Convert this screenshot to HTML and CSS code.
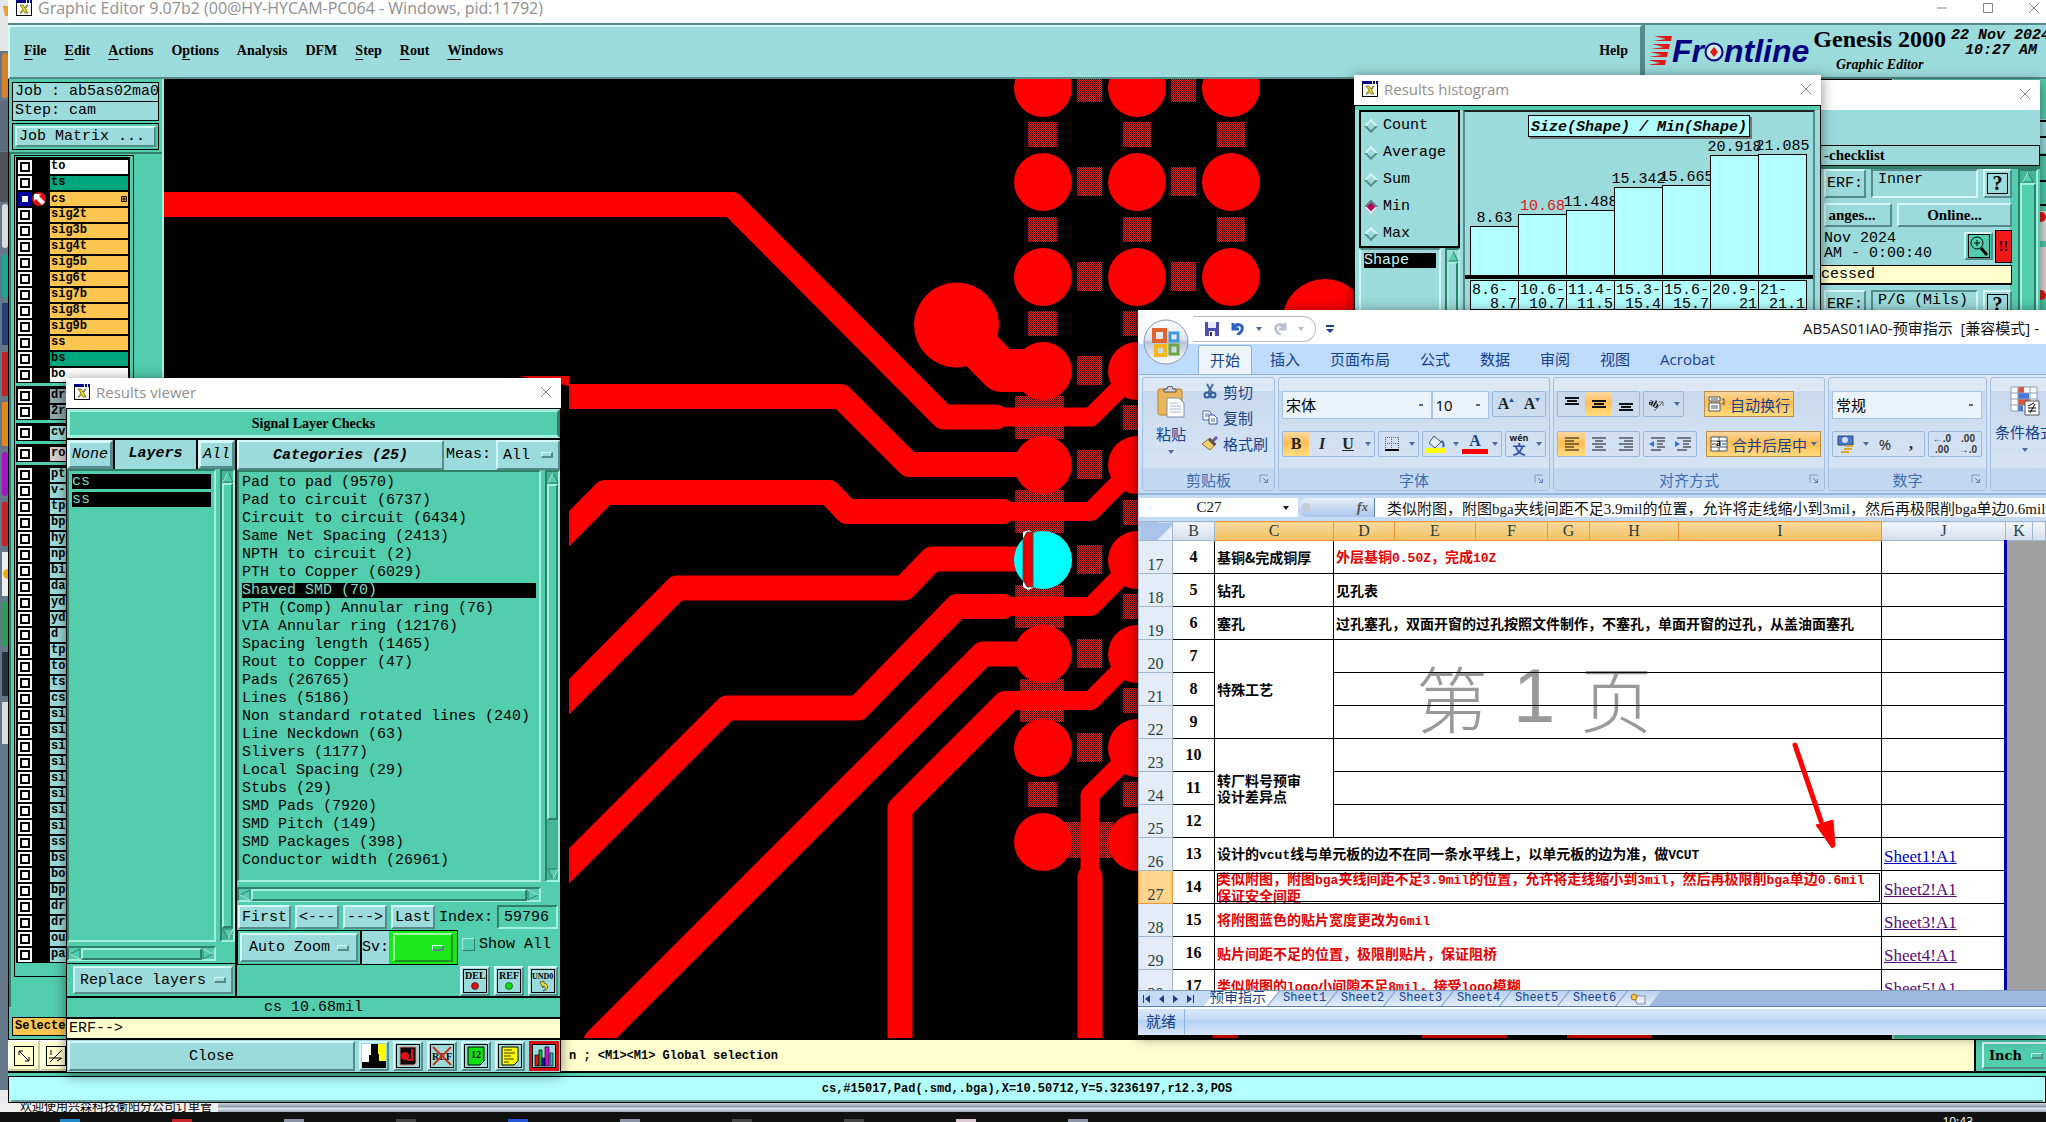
FILE: index.html
```html
<!DOCTYPE html>
<html lang="zh-CN">
  <head>
    <meta charset="UTF-8" />
    <meta name="viewport" content="width=device-width, initial-scale=1.0" />
    <title>Graphic Editor</title>
    <link rel="stylesheet" href="styles.css">
  </head>
  <body>
    <!-- shared icons -->
    <svg class="defs" width="0" height="0">
      <symbol id="xwin" viewBox="0 0 16 16">
        <rect x="0.5" y="0.5" width="15" height="15" fill="#fff" stroke="#000"/>
        <rect width="16" height="3" fill="#000080"/>
        <rect x="10" width="1" height="3" fill="#fff"/><rect x="13" width="1" height="3" fill="#fff"/>
        <path d="M4 5h3l2 3 2-3h1l-2.500 4L12 13H9L7.500 10.500 5.500 13H4l3-4z" fill="#f0e000" stroke="#333" stroke-width="0.600"/>
      </symbol>
      <symbol id="close" viewBox="0 0 12 12"><path d="M1 1l10 10M11 1L1 11" stroke="#888" fill="none"/></symbol>
      <symbol id="launch" viewBox="0 0 10 10"><path d="M1 9V1h8" stroke="#7f9bc4" fill="none"/><path d="M4 4l4 4M8.500 5v3.500H5" stroke="#5b7fb5" fill="none"/></symbol>
      <symbol id="up" viewBox="0 0 12 12"><path d="M6 1L1 11h10z" fill="#52cdad" stroke="#2f7f69"/><path d="M6 1L1 11" stroke="#b8f5e6"/></symbol>
    </svg>

    <div class="desktop">
      <svg class="strip" width="8" height="1103" viewBox="0 0 8 1103">
        <rect width="8" height="1103" fill="#64788a"/>
        <rect width="8" height="51" fill="#e4e6e8"/><path d="M3 6h5v10H5z" fill="#e8a030"/>
        <rect x="2" y="53" width="6" height="45" rx="3" fill="#d9822b"/>
        <rect y="101" width="8" height="50" fill="#5d6b80"/>
        <rect y="152" width="8" height="50" fill="#4f545b"/>
        <rect x="2" y="204" width="6" height="44" rx="3" fill="#d8dadd"/>
        <rect x="2" y="254" width="6" height="44" rx="3" fill="#1fa698"/>
        <rect x="2" y="303" width="6" height="42" fill="#27407c"/>
        <rect x="2" y="352" width="6" height="44" fill="#c22026"/>
        <rect x="2" y="402" width="6" height="44" fill="#e08a1c"/>
        <rect x="2" y="452" width="6" height="44" rx="3" fill="#a316c8"/>
        <rect x="2" y="502" width="6" height="44" fill="#c8242c"/>
        <rect x="2" y="552" width="6" height="44" fill="#eee"/><circle cx="8" cy="574" r="5" fill="#eab000"/>
        <rect x="2" y="602" width="6" height="44" fill="#2f9a58"/>
        <rect x="2" y="652" width="6" height="44" fill="#26313a"/>
        <rect x="2" y="702" width="6" height="42" fill="#ddd"/>
        <rect y="1090" width="8" height="13" fill="#e8eaec"/>
      </svg>

      <main class="editor">
        <header class="titlebar editor-title">
          <svg width="16" height="16"><use href="#xwin"/></svg>
          <span>Graphic Editor 9.07b2 (00@HY-HYCAM-PC064 - Windows, pid:11792)</span>
          <div class="win-buttons">
            <svg width="12" height="12"><path d="M1 6h10" stroke="#888"/></svg>
            <svg width="12" height="12"><path d="M1.500 1.500h9v9h-9z" stroke="#888" fill="none"/></svg>
            <svg width="12" height="12"><use href="#close"/></svg>
          </div>
        </header>

        <div class="menubar">
          <nav class="menus">
            <a href="#"><u>F</u>ile</a><a href="#"><u>E</u>dit</a><a href="#"><u>A</u>ctions</a><a href="#">O<u>p</u>tions</a><a href="#">Analysis</a><a href="#">DFM</a><a href="#"><u>S</u>tep</a><a href="#"><u>R</u>out</a><a href="#"><u>W</u>indows</a>
            <a href="#" class="help">Help</a>
          </nav>
          <div class="brand">
            <svg width="22" height="30" viewBox="0 0 22 30" fill="#e01818">
              <path d="M4 0h18l-1 5H3l13-2zM2 8h18l-1 5H1l13-2zM0 16h18l-1 5H-1l13-2zM-2 24h18l-1 5H-3l13-2z"/>
            </svg>
            <span class="logo">Fr<svg width="20" height="24" viewBox="0 0 20 24"><circle cx="10" cy="13" r="8.500" fill="#cfeef0" stroke="#000080" stroke-width="2"/><path d="M10 8l4 5-4 5-4-5z" fill="#e01818"/></svg>ntline</span>
            <div class="product"><b>Genesis 2000</b><i>Graphic Editor</i></div>
            <div class="clock"><span>22 Nov 2024</span><span>10:27 AM</span></div>
          </div>
        </div>

        <div class="workspace">
          <aside class="side">
            <div class="job">Job : ab5as02ma0</div>
            <div class="job">Step: cam</div>
            <div class="matrix"><button>Job Matrix ...</button></div>
            <div class="layer-area"><div class="layers" id="layers"></div></div>
            <div class="selected">Selected</div>
          </aside>
          <div class="canvas">
            <svg id="board" viewBox="164 79 1728 961" preserveAspectRatio="xMinYMin slice">
              <defs>
                <pattern id="hatch" width="2" height="2" patternUnits="userSpaceOnUse"><rect width="2" height="2" fill="#3a0808"/><rect width="1" height="1" fill="#e01c1c"/><rect x="1" y="1" width="1" height="1" fill="#e01c1c"/></pattern>
              </defs>
              <g id="hatches" fill="url(#hatch)"></g>
              <g id="pads" fill="#f00"></g>
              <g class="trace">
                <path d="M164 204.500H732L943.500 417H996"/>
                <path d="M560 396.500H841L909 464.500H1043"/>
                <path d="M549 549L605 492.500H829L847 511.500H1003"/>
                <path d="M549 717L677 588H904L932 559H1043"/>
                <path d="M1003 606.500H957L858 708H727L549 886"/>
                <path d="M1043 654H983L596 1041"/>
                <path d="M1005 703.500L900 808.500V1038"/>
                <path d="M1090 877V1038"/>
                <path d="M1225 1030v8"/>
              </g>
              <g class="trace neck">
                <path d="M985 417H1091L1137 371"/>
                <path d="M990 511.500H1091L1137 465"/>
                <path d="M990 606.500H1091L1137 560"/>
                <path d="M1008 700.500H1091L1137 654"/>
                <path d="M1137 748L1090 795V880"/>
              </g>
              <path d="M956 325L1001 370.500H1043" stroke="#f00" stroke-width="43" fill="none" stroke-linejoin="round"/>
              <circle cx="956.500" cy="325" r="42.500" fill="#f00"/>
              <circle cx="1325" cy="322" r="43" fill="#f00"/>
              <path d="M1422 1030h85v8h-85zM1567 1030h85v8h-85z" fill="#f00"/>
              <circle cx="1043" cy="560" r="29" fill="#0ff"/>
              <path d="M1023 532l6-2 4 3v5h-10zM1023 582h10v6l-5 2-5-3z" fill="#fff"/>
              <path d="M1023 539l4-7h6v55h-6l-4-7z" fill="#e40000" stroke="#555"/>
              <path d="M560 380h9v660h-9z"/>
              <path d="M518 376h51v10z" fill="#f00"/>
              <path d="M580 1038h1320v14H580z"/>
            </svg>
          </div>
          <aside class="right-tools">
            <svg width="8" height="200" viewBox="0 0 8 200"><rect y="12" width="8" height="34" fill="#9cdbdb"/><path d="M0 14h8M0 30h8M0 48h8M0 74h8M0 98h8" stroke="#000" stroke-width="2"/><rect y="104" width="8" height="30" fill="#dcdcdc"/><circle cx="3" cy="110" r="5" fill="#e01818"/><rect y="140" width="8" height="50" fill="#e8d8d8"/><circle cx="3" cy="188" r="5" fill="#e01818"/></svg>
          </aside>
        </div>

        <div class="message-row">
          <button class="tool"><svg width="20" height="20" viewBox="0 0 20 20" fill="none" stroke="#000"><rect x="0.500" y="0.500" width="19" height="19"/><path d="M5 5l10 10M5 9V5h4M15 11v4h-4"/></svg></button>
          <button class="tool"><svg width="20" height="20" viewBox="0 0 20 20" fill="none" stroke="#000"><rect x="0.500" y="0.500" width="19" height="19"/><path d="M4 16L16 4M3 12h12M5 4v5M11 15l5-3"/></svg></button>
          <span class="message">n ; &lt;M1&gt;&lt;M1&gt; Global selection</span>
          <div class="unit"><button class="menu-btn">Inch <i></i></button></div>
        </div>
        <div class="position-row"><output>cs,#15017,Pad(.smd,.bga),X=10.50712,Y=5.3236197,r12.3,POS</output></div>
      </main>
    </div>
    <div class="page-edge"><span>欢迎使用兴森科技衡阳分公司订单管</span></div>
    <footer class="taskbar"><i class="t1"></i><i class="t2"></i><i class="t3"></i><i class="t4"></i><i class="t5"></i><i class="t3"></i><i class="t4"></i><i class="t4"></i><i class="t6"></i><i class="t3"></i><time>10:43</time></footer>

    <!-- Results viewer -->
    <section class="window viewer">
      <header class="titlebar"><svg width="16" height="16"><use href="#xwin"/></svg><span>Results viewer</span><svg class="x" width="12" height="12"><use href="#close"/></svg></header>
      <div class="viewer-body">
        <h2 class="check-title">Signal Layer Checks</h2>
        <div class="viewer-cols">
          <div class="vcol-left">
            <div class="layer-head"><button>None</button><b>Layers</b><button>All</button></div>
            <div class="list-wrap">
              <ul class="list"><li class="on">cs</li><li class="on">ss</li></ul>
              <div class="vbar"><svg width="12" height="12"><use href="#up"/></svg><i></i><svg class="down" width="12" height="12"><use href="#up"/></svg></div>
            </div>
            <div class="hbar"><svg class="left" width="12" height="12"><use href="#up"/></svg><i></i><svg class="right" width="12" height="12"><use href="#up"/></svg></div>
            <div class="replace"><button class="menu-btn">Replace layers <i></i></button></div>
          </div>
          <div class="vcol-right">
            <div class="cat-head"><button class="cat">Categories (25)</button><span>Meas:</span><button class="menu-btn">All <i></i></button></div>
            <div class="list-wrap">
              <ul class="list" id="categories"></ul>
              <div class="vbar part"><svg width="12" height="12"><use href="#up"/></svg><i></i><em></em><svg class="down" width="12" height="12"><use href="#up"/></svg></div>
            </div>
            <div class="hbar"><svg class="left" width="12" height="12"><use href="#up"/></svg><i></i><svg class="right" width="12" height="12"><use href="#up"/></svg></div>
            <div class="nav-row"><button>First</button><button>&lt;---</button><button>---&gt;</button><button>Last</button><label for="index">Index:</label><input id="index" value="59796"></div>
            <div class="zoom-row"><div class="framed"><button class="menu-btn">Auto Zoom <i></i></button></div><div class="framed sv"><span>Sv:</span><div><button class="menu-btn" aria-label="Severity"><i></i></button></div></div><label class="show"><input type="checkbox">Show All</label></div>
            <div class="icon-row">
              <button class="ibtn"><svg width="24" height="24" viewBox="0 0 24 24"><rect x="0.500" y="0.500" width="23" height="23" fill="none" stroke="#000"/><text x="2" y="10" class="tiny">DEL</text><circle cx="12" cy="17" r="3.500" fill="#e01010" stroke="#000" stroke-width="0.500"/></svg></button>
              <button class="ibtn"><svg width="24" height="24" viewBox="0 0 24 24"><rect x="0.500" y="0.500" width="23" height="23" fill="none" stroke="#000"/><text x="2" y="10" class="tiny">REF</text><circle cx="12" cy="17" r="3.500" fill="#10e010" stroke="#000" stroke-width="0.500"/></svg></button>
              <button class="ibtn"><svg width="24" height="24" viewBox="0 0 24 24"><rect x="0.500" y="0.500" width="23" height="23" fill="none" stroke="#000"/><text x="1" y="10" class="tiny undo">UND0</text><path d="M9 13l4-1v2c5 1 5 7-1 8 3-2 3-5 0-5v2z" fill="#f0e020" stroke="#333" stroke-width="0.700"/></svg></button>
            </div>
          </div>
        </div>
        <div class="vmsg">cs 10.68mil</div>
        <div class="verf">ERF--&gt;</div>
        <div class="vfoot">
          <button class="close-btn">Close</button>
          <button class="ibtn"><svg width="24" height="24"><rect width="13" height="24" fill="#fff"/><rect x="12" width="12" height="24" fill="#ff0"/><path d="M9 0h7v10h1v7h7v7H0v-6h7v-7h2z"/><path d="M3 5h1M20 5h1"/></svg></button>
          <button class="ibtn"><svg width="24" height="24"><rect x="0.500" y="0.500" width="23" height="23" fill="none" stroke="#000"/><path d="M4 3h16v16l-2 2H4z" stroke="#d88"/><circle cx="9" cy="12" r="4" fill="#e01010"/><path d="M16 5v11h-5" stroke="#e01010" stroke-width="2" fill="none"/></svg></button>
          <button class="ibtn"><svg width="24" height="24"><rect x="0.500" y="0.500" width="23" height="23" fill="none" stroke="#000"/><text x="2" y="16" class="tiny">REF</text><path d="M3 3l18 18M21 3L3 21" stroke="#d03020" stroke-width="2"/></svg></button>
          <button class="ibtn"><svg width="24" height="24"><rect x="0.500" y="0.500" width="23" height="23" fill="none" stroke="#000"/><path d="M4 3h16v14l-4 4H4z" fill="#10e010" stroke="#000"/><text x="7" y="14" class="tiny">12</text></svg></button>
          <button class="ibtn"><svg width="24" height="24"><rect x="0.500" y="0.500" width="23" height="23" fill="none" stroke="#000"/><path d="M4 3h16v14l-4 4H4z" fill="#ff0" stroke="#000"/><path d="M6 6h8M6 9h11M6 12h7M6 15h10M6 18h5" stroke="#333"/></svg></button>
          <button class="ibtn hot"><svg width="24" height="24"><rect x="0.500" y="0.500" width="23" height="23" fill="#9cdbdb" stroke="#000"/><g stroke="#000" stroke-width="0.700"><path d="M3 11h4v11H3z" fill="#e01010"/><path d="M7 6h3v16H7z" fill="#10b030"/><path d="M10 14h3v8h-3z" fill="#1010e0"/><path d="M13 3h4v19h-4z" fill="#d010d0"/><path d="M18 9h3v13h-3z" fill="#20c0c0"/></g></svg></button>
        </div>
      </div>
    </section>

    <!-- Checklist -->
    <section class="window checklist">
      <header class="titlebar"><svg class="x" width="12" height="12"><use href="#close"/></svg></header>
      <div class="check-pad"></div>
      <div class="check-name">-checklist</div>
      <div class="check-body">
        <div class="check-main">
          <div class="erf"><button>ERF:</button><input aria-label="ERF" value="Inner"><button class="q">?</button></div>
          <div class="two"><button>anges...</button><button>Online...</button></div>
          <div class="run"><p>Nov 2024<br>AM - 0:00:40</p><button class="mag"><svg width="22" height="24" viewBox="0 0 22 24" fill="none" stroke="#000"><rect x="0.500" y="0.500" width="21" height="23"/><circle cx="9" cy="9" r="6"/><path d="M6 9h6M9 6v6"/><path d="M13 14l6 7" stroke-width="3"/></svg></button><b class="bang">!!</b></div>
          <div class="processed">cessed</div>
          <div class="erf"><button>ERF:</button><input aria-label="P/G ERF" value="P/G (Mils)"><button class="q">?</button></div>
        </div>
        <div class="vbar"><svg width="12" height="12"><use href="#up"/></svg><i></i></div>
      </div>
    </section>

    <!-- Results histogram -->
    <section class="window histogram">
      <header class="titlebar"><svg width="16" height="16"><use href="#xwin"/></svg><span>Results histogram</span><svg class="x" width="12" height="12"><use href="#close"/></svg></header>
      <div class="hist-body">
        <div class="hist-left">
          <div class="radios">
            <label><input type="radio" name="m">Count</label>
            <label><input type="radio" name="m">Average</label>
            <label><input type="radio" name="m">Sum</label>
            <label><input type="radio" name="m" checked>Min</label>
            <label><input type="radio" name="m">Max</label>
          </div>
          <div class="shape"><ul class="list"><li class="on">Shape</li></ul><div class="vbar"><svg width="12" height="12"><use href="#up"/></svg><i></i></div></div>
        </div>
        <div class="chart">
          <h3>Size(Shape) / Min(Shape)</h3>
          <div class="bars" id="bars"></div>
          <div class="ranges" id="ranges"></div>
        </div>
      </div>
    </section>

    <!-- Spreadsheet -->
    <section class="window excel">
      <header class="xl-title">
        <svg class="orb" width="46" height="46" viewBox="0 0 46 46">
          <defs><linearGradient id="og" x2="0" y2="1"><stop stop-color="#fff"/><stop offset="0.450" stop-color="#dde3ee"/><stop offset="0.500" stop-color="#b5c4dc"/><stop offset="1" stop-color="#fff"/></linearGradient></defs>
          <circle cx="23" cy="23" r="22" fill="url(#og)" stroke="#8b98b0"/>
          <g fill="none" stroke-width="4"><path d="M11 11h11v11H11z" stroke="#e2632b"/><path d="M27 14h8v8h-8z" stroke="#3f9bd4" stroke-width="3"/><path d="M13 27h9v9h-9z" stroke="#f5b71d"/><path d="M27 26h8v9h-8z" stroke="#6ca640" stroke-width="3"/></g>
        </svg>
        <div class="quick">
          <svg width="16" height="16"><path d="M1 1h14v14H1z" fill="#4a4fb0"/><path d="M4 1h8v6H4z" fill="#e8ecf8"/><path d="M5 10h6v5H5z" fill="#fff"/><path d="M6 11h2v4H6z" fill="#333"/></svg>
          <svg width="16" height="16"><path d="M3 2v6h6M4 7c3-6 10-3 8 2-1 3-4 4-4 5" stroke="#2f62c0" stroke-width="3" fill="none"/></svg>
          <i class="dd"></i>
          <svg width="16" height="16"><path d="M13 2v6H7M12 7C9 1 2 4 4 9c1 3 4 4 4 5" stroke="#b9c2cf" stroke-width="3" fill="none"/></svg>
          <i class="dd dim"></i>
        </div>
        <svg class="more" width="8" height="8" fill="#15428b"><path d="M0 0h8v2H0zM0 4h8L4 8z"/></svg>
        <span class="doc">AB5AS01IA0-预审指示 &nbsp;[兼容模式] -</span>
      </header>
      <nav class="tabs"><a href="#" class="active">开始</a><a href="#">插入</a><a href="#">页面布局</a><a href="#">公式</a><a href="#">数据</a><a href="#">审阅</a><a href="#">视图</a><a href="#">Acrobat</a></nav>
      <div class="ribbon">
        <div class="group g-clip">
          <div class="tools">
            <button class="paste"><svg width="28" height="32" viewBox="0 0 28 32"><rect x="1" y="3" width="24" height="26" rx="2" fill="#eab559" stroke="#b98331"/><path d="M7 6h12V3h-3a3 3 0 0 0-6 0H7z" fill="#cfd3d8" stroke="#555"/><path d="M10 12h12l5 5v14H10z" fill="#fff" stroke="#7a8fb5"/><path d="M13 17h8M13 20h11M13 23h11M13 26h11" stroke="#a9b9d4"/></svg>粘贴<i class="dd"></i></button>
            <div class="clip-list">
              <button><svg width="16" height="16"><path d="M5 1l5 9M11 1L6 10" stroke="#4b6ea8" stroke-width="2"/><circle cx="5" cy="12" r="2.500" fill="none" stroke="#345a9c" stroke-width="2"/><circle cx="11" cy="12" r="2.500" fill="none" stroke="#345a9c" stroke-width="2"/></svg>剪切</button>
              <button><svg width="16" height="16"><path d="M1 2h6l2 2v7H1z" fill="#fff" stroke="#4b6ea8"/><path d="M7 6h5l3 3v6H7z" fill="#fff" stroke="#2d559c"/><path d="M3 5h4M3 7h3M9 10h4M9 12h4" stroke="#4b6ea8"/></svg>复制</button>
              <button><svg width="16" height="16"><path d="M10 5l4-4 2 2-4 4z" fill="#6b50a5"/><path d="M8 3l6 6-6 6-8-6z" fill="#f0cf6c" stroke="#8c7434"/><path d="M8 3l6 6-2 2-6-6z" fill="#555"/></svg>格式刷</button>
            </div>
          </div>
          <div class="gname">剪贴板<svg width="10" height="10"><use href="#launch"/></svg></div>
        </div>
        <div class="group g-font">
          <div class="tools rows">
            <div class="row"><select class="font" aria-label="Font"><option>宋体</option></select><select class="size" aria-label="Size"><option>10</option></select><div class="set gapl"><button class="ser big">A<svg width="5" height="4" fill="#2b5ba8"><path d="M0 4l2.500-4L5 4z"/></svg></button><button class="ser">A<svg width="5" height="4" fill="#2b5ba8"><path d="M0 0h5L2.500 4z"/></svg></button></div></div>
            <div class="row gap"><div class="set"><button class="ser on">B</button><button class="ser it">I</button><button class="ser un">U</button><button class="drop"><i class="dd"></i></button></div>
              <div class="set"><button><svg width="14" height="14"><path d="M0.500 0v13M6.500 0v13M13.500 0v13M0 0.500h14M0 6.500h14" stroke="#567" stroke-dasharray="1 1"/><path d="M0 13h14" stroke="#000" stroke-width="2"/></svg></button><button class="drop"><i class="dd"></i></button></div>
              <div class="set"><button><svg width="20" height="18"><path d="M8 1l7 6-6 6-6-5z" fill="#e6ebf4" stroke="#456"/><path d="M15 6c3 1 3 4 2 6" stroke="#3566b8" stroke-width="2" fill="none"/><rect y="13" width="20" height="5" fill="#ff0"/></svg></button><button class="drop"><i class="dd"></i></button><button class="fcolor">A</button><button class="drop"><i class="dd"></i></button></div>
              <div class="set"><button class="wen">wén<b>文</b></button><button class="drop"><i class="dd"></i></button></div>
            </div>
          </div>
          <div class="gname">字体<svg width="10" height="10"><use href="#launch"/></svg></div>
        </div>
        <div class="group g-align">
          <div class="tools rows">
            <div class="row"><div class="set w3"><button><svg width="14" height="16"><path d="M0 2h14M2 5h10M0 8h14" stroke="#111" stroke-width="2"/></svg></button><button class="on"><svg width="14" height="16"><path d="M0 5h14M2 8h10M0 11h14" stroke="#111" stroke-width="2"/></svg></button><button><svg width="14" height="16"><path d="M0 8h14M2 11h10M0 14h14" stroke="#111" stroke-width="2"/></svg></button></div>
              <div class="set"><button><svg width="16" height="16"><text x="0" y="9" transform="rotate(30 2 6)" class="abx">ab</text><path d="M5 15L14 6M10 6h4v4" stroke="#666" fill="none"/></svg></button><button class="drop"><i class="dd"></i></button></div>
              <button class="wide on"><svg width="18" height="16"><path d="M1 1h11v4H1zM1 7h11v8H1z" fill="#fff" stroke="#456"/><path d="M3 3h7M3 10h7M3 12h7" stroke="#456"/><path d="M14 3h2v6l-2-2" stroke="#555" fill="none"/></svg>自动换行</button></div>
            <div class="row"><div class="set w3"><button class="on"><svg width="14" height="14"><path d="M0 1h14M0 4h9M0 7h14M0 10h9M0 13h14" stroke="#111"/></svg></button><button><svg width="14" height="14"><path d="M0 1h14M3 4h8M0 7h14M3 10h8M0 13h14" stroke="#111"/></svg></button><button><svg width="14" height="14"><path d="M0 1h14M5 4h9M0 7h14M5 10h9M0 13h14" stroke="#111"/></svg></button></div>
              <div class="set"><button><svg width="16" height="14"><path d="M2 1h14M8 4h8M8 7h6M8 10h8M2 13h10" stroke="#111"/><path d="M5 4v6L0 7z" fill="#3a6fd0"/></svg></button><button><svg width="16" height="14"><path d="M2 1h14M8 4h8M8 7h6M8 10h8M2 13h10" stroke="#111"/><path d="M0 4v6l5-3z" fill="#3a6fd0"/></svg></button></div>
              <button class="wide on"><svg width="18" height="16"><path d="M1 1h16v14H1zM1 5h16M1 11h16M9 1v4M9 11v4" fill="#fff" stroke="#456"/><path d="M2 8h4M12 8h4" stroke="#246"/><text x="6" y="10" class="abx">a</text></svg>合并后居中<i class="dd"></i></button></div>
          </div>
          <div class="gname">对齐方式<svg width="10" height="10"><use href="#launch"/></svg></div>
        </div>
        <div class="group g-num">
          <div class="tools rows">
            <div class="row"><select class="fmt" aria-label="Number format"><option>常规</option></select></div>
            <div class="row gap"><div class="set"><button><svg width="18" height="18"><path d="M1 1h15v9H1z" fill="#4a78c8" stroke="#27498a"/><circle cx="8" cy="5" r="3" fill="#cfe0f8"/><path d="M8 10h8v2H8zM7 13h8v2H7zM4 16h8v2H4z" fill="#e3a72b"/></svg></button><button class="drop"><i class="dd"></i></button><button class="pct">%</button><button class="ser">,</button></div>
              <div class="set dec"><button>←.0<br>.00</button><button>.00<br>→.0</button></div></div>
          </div>
          <div class="gname">数字<svg width="10" height="10"><use href="#launch"/></svg></div>
        </div>
        <div class="group g-cond">
          <div class="tools"><button class="paste"><svg width="30" height="30"><path d="M1 1h26v24H1z" fill="#fff" stroke="#8a9db8"/><path d="M8 1h6v6H8zM8 13h12v6H8z" fill="#e25238"/><path d="M8 7h11v6H8zM8 19h5v6H8z" fill="#4a78d8"/><path d="M1 7h26M1 13h26M1 19h26M8 1v24M20 1v24" stroke="#8a9db8"/><path d="M15 15h14v14H15z" fill="#fff" stroke="#555"/><path d="M18 22h8M18 25h8M24 17l-6 3M20 27l5-9" stroke="#000"/></svg>条件格式<i class="dd"></i></button></div>
          <div class="gname"></div>
        </div>
      </div>
      <div class="formula">
        <div class="namebox"><input aria-label="Name box" value="C27"><i class="dd"></i></div>
        <div class="fx"><i></i>f<small>x</small></div>
        <input class="ftext" aria-label="Formula" value="类似附图，附图bga夹线间距不足3.9mil的位置，允许将走线缩小到3mil，然后再极限削bga单边0.6mil保证安全间距">
      </div>
      <div class="sheet">
        <div class="watermark"><span>第</span><b>1</b><span>页</span></div>
        <table>
          <colgroup><col class="c-row"><col class="c-b"><col class="c-c"><col class="c-d"><col class="c-e"><col class="c-f"><col class="c-b"><col class="c-h"><col class="c-i"><col class="c-j"><col class="c-k"><col></colgroup>
          <thead><tr><th class="corner"></th><th>B</th><th class="sel">C</th><th class="sel">D</th><th class="sel">E</th><th class="sel">F</th><th class="sel">G</th><th class="sel">H</th><th class="sel">I</th><th>J</th><th>K</th><th></th></tr></thead>
          <tbody>
            <tr><th>17</th><td class="n">4</td><td>基铜&amp;完成铜厚</td><td colspan="6" class="red">外层基铜<s>0.50Z</s>，完成<s>10Z</s></td><td class="j"></td><td class="out" colspan="2" rowspan="14"></td></tr>
            <tr><th>18</th><td class="n">5</td><td>钻孔</td><td colspan="6">见孔表</td><td class="j"></td></tr>
            <tr><th>19</th><td class="n">6</td><td>塞孔</td><td colspan="6">过孔塞孔，双面开窗的过孔按照文件制作，不塞孔，单面开窗的过孔，从盖油面塞孔</td><td class="j"></td></tr>
            <tr><th>20</th><td class="n">7</td><td rowspan="3">特殊工艺</td><td colspan="6"></td><td class="j"></td></tr>
            <tr><th>21</th><td class="n">8</td><td colspan="6"></td><td class="j"></td></tr>
            <tr><th>22</th><td class="n">9</td><td colspan="6"></td><td class="j"></td></tr>
            <tr><th>23</th><td class="n">10</td><td rowspan="3">转厂料号预审<br>设计差异点</td><td colspan="6"></td><td class="j"></td></tr>
            <tr><th>24</th><td class="n">11</td><td colspan="6"></td><td class="j"></td></tr>
            <tr><th>25</th><td class="n">12</td><td colspan="6"></td><td class="j"></td></tr>
            <tr><th>26</th><td class="n">13</td><td colspan="7">设计的<s>vcut</s>线与单元板的边不在同一条水平线上，以单元板的边为准，做<s>VCUT</s></td><td class="j"><a href="#" class="new">Sheet1!A1</a></td></tr>
            <tr><th class="sel">27</th><td class="n">14</td><td colspan="7" class="red cur">类似附图，附图<s>bga</s>夹线间距不足<s>3.9mil</s>的位置，允许将走线缩小到<s>3mil</s>，然后再极限削<s>bga</s>单边<s>0.6mil</s><br>保证安全间距</td><td class="j"><a href="#">Sheet2!A1</a></td></tr>
            <tr><th>28</th><td class="n">15</td><td colspan="7" class="red">将附图蓝色的贴片宽度更改为<s>6mil</s></td><td class="j"><a href="#">Sheet3!A1</a></td></tr>
            <tr><th>29</th><td class="n">16</td><td colspan="7" class="red">贴片间距不足的位置，极限削贴片，保证阻桥</td><td class="j"><a href="#">Sheet4!A1</a></td></tr>
            <tr><th>30</th><td class="n">17</td><td colspan="7" class="red">类似附图的<s>logo</s>小间隙不足<s>8mil</s>，接受<s>logo</s>模糊</td><td class="j"><a href="#">Sheet5!A1</a></td></tr>
          </tbody>
        </table>
        <svg class="arrow" width="50" height="110" viewBox="0 0 50 110"><path d="M5 4L31 80" stroke="#f00" stroke-width="5" stroke-linecap="round"/><path d="M26 84l17-5 2 26-3 2z" fill="#f00" stroke="#f00" stroke-linejoin="round"/></svg>
      </div>
      <div class="sheet-tabs">
        <div class="steps"><svg width="62" height="10" viewBox="0 0 62 10" fill="#1f3f84"><path d="M5 1h1v8H5zM12 1v8L7 5zM26 1v8l-5-4zM35 1v8l5-4zM49 1v8l5-4zM55 1h1v8h-1z"/></svg></div>
        <a href="#" class="active">预审指示</a><a href="#">Sheet1</a><a href="#">Sheet2</a><a href="#">Sheet3</a><a href="#">Sheet4</a><a href="#">Sheet5</a><a href="#">Sheet6</a>
        <a href="#" class="newtab" aria-label="New sheet"><svg width="16" height="12"><path d="M4 3h11v8H7z" fill="#e8eef8" stroke="#7d89a8"/><circle cx="4" cy="4" r="3" fill="#f6c34a" stroke="#a87420"/></svg></a>
      </div>
      <div class="xl-status"><span>就绪</span></div>
    </section>
    <script src="script.js"></script>
  </body>
</html>
```

FILE: styles.css
```css
/* basic styling */
* {
  margin: 0;
  padding: 0;
  box-sizing: border-box;
}
:root {
  --aqua: #9cdbdb;
  --aqua-lo: #558b8b;
  --aqua-hi: #d4f8f8;
  --green: #52cdad;
  --green-lo: #2f7f69;
  --green-hi: #a4f0de;
  --mono: "Liberation Mono", monospace;
  --serif: "Liberation Serif", serif;
  --cjk: "Open Sans", "Noto Sans CJK SC", sans-serif;
}
body {
  position: relative;
  display: flex;
  flex-direction: column;
  height: 100vh;
  overflow: hidden;
  background: #64788a;
  font-family: var(--mono);
  font-size: 15px;
  color: #000;
}
button,
input,
select {
  font: inherit;
  color: inherit;
}
button {
  border: 2px solid;
  border-color: var(--aqua-hi) var(--aqua-lo) var(--aqua-lo) var(--aqua-hi);
  background: var(--aqua);
}
a {
  color: inherit;
  text-decoration: none;
}
ul {
  list-style: none;
}
svg {
  flex: none;
  display: block;
}
.defs {
  position: absolute;
}
.desktop {
  flex: 1;
  min-height: 0;
  display: flex;
}
.strip {
  width: 8px;
}

/* title bars */
.titlebar {
  display: flex;
  align-items: center;
  gap: 6px;
  height: 30px;
  padding: 0 9px 2px 8px;
  background: #fff;
  color: #8f8f8f;
  font: 15px "Open Sans", sans-serif;
}
.titlebar .x,
.win-buttons {
  margin-left: auto;
}
.win-buttons {
  display: flex;
  gap: 34px;
}
.window {
  position: absolute;
  box-shadow: 0 2px 12px rgba(0, 0, 0, 0.5);
}

/* main editor */
.editor {
  flex: 1;
  min-width: 0;
  display: flex;
  flex-direction: column;
  background: var(--green);
}
.editor-title {
  height: 23px;
  padding: 0 6px 8px 8px;
  font-size: 16px;
}
.menubar {
  display: flex;
  height: 56px;
  border-top: 2px solid var(--aqua-lo);
  background: var(--aqua);
  font: bold 14px var(--serif);
}
.menus {
  flex: 1;
  display: flex;
  align-items: center;
  gap: 18px;
  padding: 0 12px 2px 14px;
  border: 2px solid;
  border-color: var(--aqua-hi) var(--aqua-lo) var(--aqua-lo) var(--aqua-hi);
}
.menus u {
  text-underline-offset: 4px;
}
.help {
  margin-left: auto;
}
.brand {
  display: flex;
  align-items: center;
  width: 404px;
  padding-left: 5px;
  border-left: 3px solid var(--aqua-lo);
  border-bottom: 2px solid var(--aqua-lo);
  white-space: nowrap;
}
.logo {
  display: flex;
  align-items: center;
  color: #000080;
  font: italic bold 32px "Liberation Sans", sans-serif;
}
.product {
  display: flex;
  flex-direction: column;
  align-items: center;
  margin-left: 4px;
}
.product b {
  font-size: 24px;
  line-height: 28px;
}
.product i {
  line-height: 24px;
}
.clock {
  display: flex;
  flex-direction: column;
  align-self: flex-start;
  margin-left: 5px;
  font: italic bold 15px/15px var(--mono);
  padding-top: 3px;
}
.clock span + span {
  padding-left: 14px;
}
.workspace {
  flex: 1;
  min-height: 0;
  display: flex;
}
.side {
  display: flex;
  flex-direction: column;
  width: 156px;
  padding: 3px;
  border-right: 2px solid var(--green-hi);
  border-left: 1px solid #000;
}
.job {
  height: 20px;
  margin-bottom: -1px;
  padding-left: 2px;
  border: 1px solid #000;
  background: var(--aqua);
  font-size: 15px;
  line-height: 18px;
  white-space: nowrap;
}
.matrix {
  margin-top: 3px;
  padding: 2px;
  border: 1px solid #000;
}
.matrix button {
  display: block;
  width: 100%;
  height: 21px;
  padding-left: 2px;
  line-height: 17px;
  text-align: left;
}
.layer-area {
  flex: 1;
  min-height: 0;
  margin: 2px -3px 10px;
  padding: 1px 28px 0 3px;
  border-top: 2px solid var(--green-lo);
  border-left: 2px solid var(--green-lo);
}
.layers {
  padding: 1px 3px 10px 1px;
  border: 1px solid #000;
}
.layer-set {
  margin-bottom: 3px;
  padding-top: 2px;
  background: #000;
}
.layer {
  display: flex;
  align-items: center;
  height: 16px;
  padding: 0 2px;
}
.layer input {
  appearance: none;
  width: 14px;
  height: 14px;
  background: linear-gradient(#fff, #fff) center / 6px 6px no-repeat,
    linear-gradient(#000, #000) center / 10px 10px no-repeat, #fff;
}
.layer input:checked {
  background: linear-gradient(#fff, #fff) center / 6px 6px no-repeat, #0000a0;
}
.layer .mark {
  width: 18px;
}
.layer label {
  flex: 1;
  height: 14px;
  overflow: hidden;
  padding-left: 1px;
  background: var(--aqua);
  font: bold 12px/13px var(--mono);
}
.layer .white { background: #fff; }
.layer .mask { background: #00a67c; }
.layer .sig { background: #fcc54f; }
.layer .gray { background: #8fa9ae; }
.layer .rout { background: #d8d0d0; }
.layer .active {
  display: flex;
  align-items: center;
  justify-content: space-between;
  padding-right: 1px;
}
.selected {
  height: 19px;
  padding-left: 2px;
  border: 1px solid #000;
  background: #fcc54f;
  font: bold 12px/17px var(--mono);
}
.canvas {
  flex: 1;
  min-width: 0;
  background: #000;
  overflow: hidden;
}
.canvas svg {
  width: 100%;
  height: 100%;
}
.trace {
  fill: none;
  stroke: #f00;
  stroke-width: 25;
  stroke-linejoin: round;
  stroke-linecap: round;
}
.neck {
  stroke-width: 19;
}
.right-tools {
  width: 154px;
  padding-top: 28px;
  border-left: 2px solid var(--green-hi);
  display: flex;
  justify-content: flex-end;
  align-items: flex-start;
}
.message-row {
  display: flex;
  align-items: center;
  height: 34px;
  border-bottom: 2px solid #000;
  border-top: 1px solid #000;
  background: #ffffce;
  font: bold 12px var(--mono);
}
.tool {
  width: 32px;
  height: 31px;
  padding: 3px 4px;
  background: #ffffce;
  border-color: #fff #c9c99a #c9c99a #fff;
}
.message {
  flex: 1;
  padding-left: 497px;
}
.unit {
  width: 72px;
  height: 31px;
  padding: 2px 0 2px 6px;
  background: var(--green);
  border-left: 2px solid #000;
  overflow: hidden;
}
.unit .menu-btn {
  justify-content: flex-start;
  gap: 9px;
  width: 80px;
  height: 27px;
  padding: 0 5px;
  background: var(--green);
  font: bold 13px "DejaVu Serif", serif;
}
.position-row {
  height: 27px;
  margin-top: 3px;
  padding: 1px 2px;
  border: 1px solid #000;
  background: #b2ffff;
  text-align: center;
  font: bold 12px/22px var(--mono);
}
.position-row output {
  display: block;
  border-bottom: 2px solid #6a9c9c;
}
.page-edge {
  height: 9px;
  overflow: hidden;
  background: linear-gradient(#cfd8e2, #8c9bab 40%, #dfe6ee 60%, #9aa8b6);
  display: flex;
  align-items: flex-end;
}
.page-edge span {
  width: 218px;
  padding-left: 20px;
  background: #efefef;
  font: 12px/12px "Noto Sans CJK SC", sans-serif;
}
.taskbar {
  display: flex;
  align-items: flex-end;
  gap: 92px;
  height: 10px;
  padding: 0 73px 0 60px;
  background: #111;
  overflow: hidden;
}
.taskbar i {
  width: 20px;
  height: 3px;
}
.t1 { background: #1e88c8; }
.t2 { background: #c8242c; }
.t3 { background: #8a93a5; }
.t4 { background: #444; }
.t5 { background: #2456d8; }
.t6 { background: #d8c8d0; }
.taskbar time {
  margin-left: auto;
  color: #fff;
  font: 12px/5px "Open Sans", sans-serif;
  height: 3px;
}

/* menu style button with the small raised bar */
.menu-btn {
  display: flex;
  align-items: center;
  justify-content: space-between;
  padding: 0 7px;
  white-space: nowrap;
}
.menu-btn i {
  flex: none;
  width: 12px;
  height: 6px;
  border: 1px solid;
  border-width: 1px 2px 2px 1px;
  border-color: var(--aqua-hi) var(--aqua-lo) var(--aqua-lo) var(--aqua-hi);
}
.list {
  flex: 1;
  padding: 3px;
  border: 2px solid;
  border-color: var(--green-lo) var(--green-hi) var(--green-hi) var(--green-lo);
}
.list li {
  height: 15px;
  margin-bottom: 3px;
  line-height: 15px;
  white-space: nowrap;
}
.list .on {
  background: #000;
  color: #7fdcc4;
}
.list-wrap {
  display: flex;
  gap: 4px;
  min-height: 0;
}
.vbar {
  flex: none;
  display: flex;
  flex-direction: column;
  align-items: center;
  width: 15px;
  border: 2px solid;
  border-color: var(--green-lo) var(--green-hi) var(--green-hi) var(--green-lo);
  background: #45b598;
}
.vbar i {
  flex: 1;
  width: 100%;
  border: 2px solid;
  border-color: var(--green-hi) var(--green-lo) var(--green-lo) var(--green-hi);
  background: var(--green);
}
.vbar em {
  height: 48px;
}
.down { transform: rotate(180deg); }
.left { transform: rotate(-90deg); }
.right { transform: rotate(90deg); }
.hbar {
  display: flex;
  align-items: center;
  height: 15px;
  margin: 4px 19px 0 0;
  border: 2px solid;
  border-color: var(--green-lo) var(--green-hi) var(--green-hi) var(--green-lo);
}
.hbar i {
  flex: 1;
  height: 12px;
  border: 2px solid;
  border-color: var(--green-hi) var(--green-lo) var(--green-lo) var(--green-hi);
}

/* results viewer */
.viewer {
  left: 66px;
  top: 378px;
  width: 495px;
}
.viewer-body {
  border: 1px solid #000;
  background: var(--green);
}
.check-title {
  height: 29px;
  border: 3px solid;
  border-color: var(--green-hi) var(--green-lo) var(--green-lo) var(--green-hi);
  border-bottom-color: var(--green-hi);
  font: bold 14px/23px var(--serif);
  text-align: center;
}
.viewer-cols {
  display: flex;
  border-top: 2px solid #000;
  border-bottom: 2px solid #000;
}
.vcol-left {
  display: flex;
  flex-direction: column;
  width: 170px;
  border-right: 2px solid #000;
}
.vcol-right {
  flex: 1;
  min-width: 0;
  display: flex;
  flex-direction: column;
}
.layer-head {
  display: flex;
  height: 29px;
  font-style: italic;
  background: #000;
  gap: 2px;
}
.layer-head button {
  border-width: 3px;
  padding: 0 2px;
}
.layer-head b {
  flex: 1;
  background: var(--aqua);
  line-height: 28px;
  text-align: center;
}
.vcol-left .list-wrap {
  flex: 1;
}
.replace {
  margin-top: 2px;
  padding: 2px 2px 2px 6px;
  border-top: 1px solid #000;
}
.replace .menu-btn {
  width: 100%;
  height: 28px;
  padding: 0 5px;
}
.cat-head {
  display: flex;
  height: 30px;
  background: var(--aqua);
}
.cat-head .cat {
  width: 207px;
  font-style: italic;
  font-weight: bold;
}
.cat-head span {
  width: 52px;
  padding-left: 2px;
  line-height: 30px;
}
.cat-head .menu-btn {
  flex: 1;
  padding: 0 5px;
}
.vcol-right .list-wrap {
  height: 412px;
}
.vcol-right .hbar {
  margin-top: 5px;
}
.nav-row {
  display: flex;
  align-items: center;
  gap: 4px;
  height: 24px;
  margin: 3px 2px 1px 1px;
}
.nav-row button {
  height: 24px;
  padding: 0 2px;
  white-space: nowrap;
}
.nav-row input {
  flex: 1;
  min-width: 0;
  height: 24px;
  padding-left: 5px;
  border: 2px solid;
  border-color: var(--green-lo) var(--green-hi) var(--green-hi) var(--green-lo);
  background: var(--green);
}
.zoom-row {
  display: flex;
  height: 35px;
}
.framed {
  padding: 2px;
  border: 1px solid #000;
}
.zoom-row .menu-btn {
  width: 118px;
  height: 29px;
}
.sv {
  display: flex;
  padding: 0;
}
.sv span {
  background: var(--aqua);
  line-height: 33px;
}
.sv div {
  padding: 2px 4px;
  background: #1ae81a;
}
.sv .menu-btn {
  width: 60px;
  justify-content: flex-end;
  background: #1ae81a;
  border-color: #a0f8a0 #209020 #209020 #a0f8a0;
}
.show {
  display: flex;
  align-items: center;
  gap: 4px;
  height: 28px;
  padding-left: 4px;
}
.show input {
  appearance: none;
  width: 13px;
  height: 13px;
  border: 1px solid;
  border-color: var(--green-hi) var(--green-lo) var(--green-lo) var(--green-hi);
}
.icon-row {
  display: flex;
  justify-content: flex-end;
  gap: 4px;
  padding: 1px 2px 0 0;
}
.ibtn {
  flex: none;
  display: flex;
  align-items: center;
  justify-content: center;
  width: 30px;
  height: 30px;
}
.tiny {
  font: bold 10px "Liberation Serif", serif;
}
.tiny.undo {
  font-size: 8px;
}
.vmsg,
.verf {
  height: 21px;
  border-bottom: 2px solid #000;
  line-height: 19px;
  text-align: center;
}
.verf {
  padding-left: 2px;
  background: #ffffce;
  text-align: left;
}
.vfoot {
  display: flex;
  gap: 4px;
  padding: 1px;
  background: var(--aqua);
}
.close-btn {
  flex: 1;
}
.ibtn.hot {
  background: #d81010;
  border-color: #d81010;
}

/* histogram */
.histogram {
  left: 1354px;
  top: 75px;
  width: 467px;
  height: 240px;
  overflow: hidden;
  background: var(--aqua);
}
.hist-body {
  display: flex;
  gap: 3px;
  height: 210px;
  padding: 4px 5px 0 4px;
  border: 1px solid #000;
  border-width: 1px 1px 0;
  background: linear-gradient(var(--green) 4px, var(--aqua) 4px);
}
.hist-left {
  flex: none;
  width: 101px;
}
.radios {
  height: 138px;
  border: 2px solid #000;
}
.radios label {
  display: flex;
  align-items: center;
  gap: 7px;
  height: 27px;
  padding-left: 5px;
}
.radios input {
  appearance: none;
  width: 10px;
  height: 10px;
  border: 2px solid;
  border-color: var(--aqua-hi) var(--aqua-lo) var(--aqua-lo) var(--aqua-hi);
  transform: rotate(45deg);
}
.radios input:checked {
  background: #c00050;
  border-color: var(--aqua-lo) var(--aqua-hi) var(--aqua-hi) var(--aqua-lo);
}
.shape {
  display: flex;
  gap: 4px;
  height: 70px;
}
.histogram .list {
  border-color: var(--aqua-lo) var(--aqua-hi);
}
.histogram .list .on {
  color: #c8f4f4;
}
.histogram .vbar,
.histogram .vbar i {
  background: var(--aqua);
}
.chart {
  flex: 1;
  min-width: 0;
  display: flex;
  flex-direction: column;
  border: 2px solid;
  border-color: #222 var(--aqua-lo);
}
.chart h3 {
  align-self: center;
  height: 22px;
  margin-top: 3px;
  padding: 0 2px;
  border: 1px solid #000;
  background: #b2ffff;
  box-shadow: 2px 2px 0 #777;
  font: italic bold 15px/24px var(--mono);
}
.bars {
  display: flex;
  align-items: flex-end;
  height: 142px;
  padding: 0 7px 0 5px;
  border-bottom: 4px solid #000;
}
.bar {
  flex: 1;
  min-width: 0;
  margin-right: -1px;
  border: 1px solid #000;
  border-bottom: 0;
  background: #b2ffff;
  white-space: nowrap;
}
.bar span {
  display: flex;
  justify-content: center;
  line-height: 15px;
  margin-top: -16px;
}
.bar.pick span {
  color: #e81010;
}
.ranges {
  display: flex;
  height: 30px;
  margin: 1px 7px 0 5px;
}
.ranges div {
  flex: 1;
  min-width: 0;
  margin-right: -1px;
  padding: 3px 0 0 1px;
  border: 1px solid #000;
  background: #b2ffff;
  line-height: 14px;
  white-space: pre;
}
.ranges span {
  display: block;
  padding-right: 1px;
  text-align: right;
}

/* checklist */
.checklist {
  left: 1818px;
  right: 6px;
  top: 80px;
  height: 236px;
  overflow: hidden;
  background: var(--aqua);
}
.check-pad {
  height: 35px;
}
.check-name {
  height: 21px;
  padding-left: 5px;
  border: 1px solid #000;
  font: bold 15px/19px var(--serif);
}
.check-body {
  display: flex;
  gap: 6px;
  height: 160px;
  padding-left: 6px;
  border-top: 3px solid var(--green-lo);
  background: linear-gradient(90deg, var(--aqua) 192px, var(--green) 192px);
}
.check-main {
  flex: 1;
  min-width: 0;
  display: flex;
  flex-direction: column;
  gap: 5px;
}
.erf {
  display: flex;
  gap: 5px;
  height: 29px;
}
.erf input {
  flex: 1;
  min-width: 0;
  padding: 0 0 8px 5px;
  border: 2px solid;
  border-color: var(--aqua-lo) var(--aqua-hi) var(--aqua-hi) var(--aqua-lo);
  background: var(--aqua);
}
.erf button {
  width: 42px;
}
.erf .q {
  width: 29px;
  outline: 1px solid #000;
  outline-offset: -5px;
  font: bold 20px var(--serif);
}
.two {
  display: flex;
  gap: 5px;
  height: 24px;
  font: bold 15px var(--serif);
}
.two button {
  width: 68px;
  padding-right: 12px;
}
.two button + button {
  flex: 1;
  padding: 0;
}
.run {
  display: flex;
  align-items: center;
  height: 28px;
  line-height: 15px;
}
.run p {
  flex: 1;
  white-space: nowrap;
}
.mag {
  display: flex;
  align-items: center;
  justify-content: center;
  width: 29px;
  height: 28px;
  background: var(--green);
}
.bang {
  width: 17px;
  height: 33px;
  margin-left: 2px;
  border: 1px solid #000;
  background: #f01818;
  text-align: center;
  font: bold 14px/31px var(--serif);
}
.processed {
  height: 20px;
  margin-left: -4px;
  border: 1px solid #000;
  border-bottom-width: 2px;
  background: #ffffce;
  line-height: 18px;
}
.checklist .vbar {
  width: 20px;
  margin-right: 2px;
}

/* spreadsheet */
.excel {
  left: 1138px;
  right: 0;
  top: 310px;
  background: #fff;
  font-family: var(--cjk);
  color: #15428b;
}
.excel button {
  border: 0;
  background: none;
}
.xl-title {
  display: flex;
  align-items: center;
  height: 34px;
  padding: 0 7px 0 5px;
}
.orb {
  position: relative;
  top: 15px;
}
.quick {
  display: flex;
  align-items: center;
  gap: 10px;
  height: 26px;
  margin: 3px 0 0 4px;
  padding: 0 11px;
  border: 1px solid #bbb;
  border-left: 0;
  border-radius: 0 13px 13px 0;
}
.dd {
  display: inline-block;
  flex: none;
  width: 0;
  border: 3px solid transparent;
  border-top: 4px solid #4a6a9c;
  border-bottom: 0;
}
.dd.dim {
  border-top-color: #bbb;
}
.more {
  margin: 4px 0 0 10px;
}
.doc {
  margin-left: auto;
  color: #111;
}
.tabs {
  display: flex;
  height: 30px;
  padding-left: 60px;
  background: #bfdbff;
  line-height: 30px;
}
.tabs a {
  padding: 0 15px;
}
.tabs .active {
  padding: 0 11px;
  margin: 1px 3px 0 0;
  border: 1px solid #8db2e3;
  border-bottom: 0;
  border-radius: 3px 3px 0 0;
  background: #eef4fc;
  line-height: 28px;
}
.ribbon {
  display: flex;
  gap: 3px;
  height: 121px;
  padding: 2px 0 2px 4px;
  border-top: 1px solid #8db2e3;
  background: linear-gradient(#dfe9f5, #c9dbf0);
  border-bottom: 2px solid #92b4de;
  overflow: hidden;
}
.group {
  flex: none;
  display: flex;
  flex-direction: column;
  border: 1px solid #a5bfe0;
  border-radius: 3px;
  background: linear-gradient(#dee8f5 13px, #c9d9ed 13px, #d9e7f7);
}
.g-clip { width: 133px; }
.g-font { width: 272px; }
.g-align { width: 272px; }
.g-num { width: 159px; }
.g-cond { width: 120px; }
.tools {
  flex: 1;
  display: flex;
}
.gname {
  display: flex;
  align-items: center;
  justify-content: center;
  height: 22px;
  background: #c1d8f0;
  color: #3e6db5;
}
.gname svg {
  margin-left: auto;
  margin-right: 5px;
}
.gname::before {
  content: "";
  width: 15px;
  margin-right: auto;
}
.paste {
  display: flex;
  flex-direction: column;
  align-items: center;
  width: 56px;
  padding-top: 8px;
  line-height: 32px;
  white-space: nowrap;
}
.g-cond .paste {
  width: 68px;
}
.clip-list button {
  display: flex;
  align-items: center;
  gap: 5px;
  height: 26px;
  padding-left: 3px;
  white-space: nowrap;
}
.rows {
  flex-direction: column;
  padding: 13px 3px 0;
  gap: 12px;
}
.row {
  display: flex;
  height: 28px;
}
.row.gap {
  gap: 3px;
}
.excel select {
  appearance: none;
  padding: 0 3px;
  border: 1px solid #a8c3e6;
  border-radius: 0;
  background: linear-gradient(#4a6a9c, #4a6a9c) right 8px center / 4px 2px no-repeat, #eaf2fb;
  color: #000;
}
.font { width: 151px; }
.size { width: 58px; }
.fmt { width: 150px; }
.set {
  display: flex;
  height: 26px;
  border: 1px solid #9ab7de;
  border-radius: 2px;
}
.gapl {
  margin-left: 3px;
}
.set button {
  display: flex;
  align-items: center;
  justify-content: center;
  width: 26px;
}
.set .drop {
  width: 13px;
}
.excel button.on {
  background: linear-gradient(#fbd9a2, #fdbd55 45%, #ffde80);
}
.set .ser {
  font: bold 16px var(--serif);
  color: #222;
}
.ser svg {
  align-self: flex-start;
  margin-top: 6px;
}
.set .it { font-style: italic; }
.set .un { text-decoration: underline; }
.set .fcolor {
  height: 22px;
  border-bottom: 5px solid #f00;
  font: bold 16px/16px var(--serif);
}
.set .wen {
  flex-direction: column;
  font: bold 9px/9px "Open Sans", sans-serif;
  color: #222;
}
.wen b {
  font: bold 13px/13px "Noto Sans CJK SC", sans-serif;
  color: #2f50b8;
}
.g-align .row {
  gap: 3px;
}
.g-align .row .set:first-child button {
  width: 27px;
}
.abx {
  font: bold 10px var(--serif);
}
.wide {
  display: flex;
  align-items: center;
  gap: 4px;
  height: 26px;
  margin-left: auto;
  padding: 0 4px;
  outline: 1px solid #c08e4a;
  outline-offset: -1px;
  white-space: nowrap;
}
.g-align .row:first-child .wide {
  margin-right: 27px;
}
.set.dec button {
  font: bold 10px/11px "Liberation Sans", sans-serif;
  color: #333;
}
.pct {
  color: #222;
}
.formula {
  display: flex;
  height: 26px;
  padding: 3px 0 4px 1px;
  background: #c5daf3;
}
.formula input {
  min-width: 0;
  border: 0;
  background: none;
  color: #111;
  font: 15px "Liberation Serif", "Noto Sans CJK SC", serif;
}
.formula .namebox {
  display: flex;
  align-items: center;
  width: 159px;
  background: #fff;
}
.formula .namebox input {
  width: 140px;
  text-align: center;
}
.namebox .dd {
  margin-left: 4px;
  border-top-color: #111;
}
.fx {
  display: flex;
  align-items: center;
  width: 76px;
  padding: 0 6px 0 4px;
  border-radius: 9px 0 0 9px;
  background: linear-gradient(#e7f0fb, #a9c4e8);
  color: #555;
  font: italic bold 15px var(--serif);
}
.fx i {
  width: 9px;
  height: 9px;
  margin-right: auto;
  border-radius: 50%;
  background: #c3cbd8;
}
.formula .ftext {
  flex: 1;
  padding-left: 12px;
  border-left: 1px solid #5a82b8;
  background: #fff;
}
.sheet {
  position: relative;
  height: 469px;
  overflow: hidden;
  font: bold 14px/16px "Noto Sans CJK SC", sans-serif;
  color: #000;
}
.sheet table {
  position: relative;
  width: 100%;
  table-layout: fixed;
  border-collapse: collapse;
}
.c-row { width: 34px; }
.c-b { width: 42px; }
.c-c { width: 119px; }
.c-d { width: 61px; }
.c-e { width: 81px; }
.c-f { width: 72px; }
.c-h { width: 89px; }
.c-i { width: 203px; }
.c-j { width: 124px; }
.c-k { width: 27px; }
.sheet thead th {
  height: 19px;
  border: 1px solid #9eb6ce;
  background: linear-gradient(#f3f7fc, #d3dcea);
  color: #27413e;
  font: 16px/18px var(--serif);
}
.sheet thead .sel {
  border-color: #f29536;
  background: linear-gradient(#f9d99f, #f1c15f);
}
.sheet thead .corner {
  background: linear-gradient(135deg, #a9c4e9 70%, #e6eef9 70%);
}
.sheet tbody th {
  height: 33px;
  padding-bottom: 0;
  border: 1px solid #9eb6ce;
  background: #e4ecf7;
  color: #27413e;
  font: 16px/16px var(--serif);
  vertical-align: bottom;
}
.sheet tbody th.sel {
  background: #ffd58d;
  border-color: #f29536;
}
.sheet td {
  height: 33px;
  padding-left: 2px;
  border: 1px solid #000;
  white-space: nowrap;
}
.sheet .n {
  padding: 0;
  text-align: center;
  font: bold 16px var(--serif);
}
.sheet s {
  font: bold 13px/14px var(--mono);
  text-decoration: none;
}
.sheet .red {
  color: #e60000;
}
.sheet .cur {
  outline: 1px solid #000;
  outline-offset: -3px;
  line-height: 15px;
}
.sheet .j {
  padding: 5px 0 0 2px;
  font: 17px var(--serif);
}
.j a {
  color: #5a0a78;
  text-decoration: underline;
}
.j .new {
  color: #0000c0;
}
.sheet .out {
  border: 0;
  border-left: 3px solid #0000b0;
  background: #a0a0a0;
}
.watermark {
  position: absolute;
  left: 278px;
  top: 123px;
  display: flex;
  gap: 25px;
  color: #999;
  font: 300 72px/104px "Noto Sans CJK SC", sans-serif;
}
.watermark b {
  font: 76px/104px "Liberation Sans", sans-serif;
}
.arrow {
  position: absolute;
  left: 652px;
  top: 220px;
}
.sheet-tabs {
  display: flex;
  height: 17px;
  border-top: 1px solid #7f9db9;
  border-bottom: 1px solid #5a82b8;
  background: #9fb9de;
  font: 12px/15px "Liberation Mono", "Noto Sans CJK SC", monospace;
}
.steps {
  display: flex;
  align-items: center;
  width: 72px;
  background: #c5dbf6;
}
.sheet-tabs a {
  position: relative;
  z-index: 0;
  width: 58px;
  padding-left: 10px;
}
.sheet-tabs a::before {
  content: "";
  position: absolute;
  z-index: -1;
  inset: 0;
  border-left: 1px solid #7c9cc8;
  background: linear-gradient(#b9d0ef, #e3edfa);
  transform: skewX(-38deg);
}
.sheet-tabs .active {
  width: 63px;
  padding-left: 0;
  font-size: 14px;
}
.sheet-tabs .active::before {
  background: #fff;
  border: 0;
}
.sheet-tabs .newtab {
  width: 34px;
  padding: 2px 0 0 9px;
}
.xl-status {
  height: 28px;
  border-top: 2px solid #fff;
  background: linear-gradient(#d7e6f9, #c7dcf8 40%, #b3d0f5 42%, #d7e5f7);
}
.xl-status span {
  display: block;
  width: 47px;
  padding-left: 8px;
  border-right: 1px solid #8db2e3;
  line-height: 25px;
}
```

FILE: script.js
```js
// layer list, one array per block
const layerSets = [
  [["to", "white"], ["ts", "mask"], ["cs", "sig"], ["sig2t", "sig"], ["sig3b", "sig"], ["sig4t", "sig"], ["sig5b", "sig"], ["sig6t", "sig"], ["sig7b", "sig"], ["sig8t", "sig"], ["sig9b", "sig"], ["ss", "sig"], ["bs", "mask"], ["bo", "white"]],
  [["drl", "gray"], ["2rd", "gray"]],
  [["cvr", ""]],
  [["rout", "rout"]],
  ["pth", "v-c", "tp", "bp", "hyc", "npt", "bia", "dat", "yd", "yd", "d", "tp", "to", "ts", "cs", "sig", "sig", "sig", "sig", "sig", "sig", "sig", "sig", "ss", "bs", "bo", "bp", "drl", "drr", "out", "pan"].map((n) => [n, ""]),
];
const arrow = '<svg width="14" height="14"><circle cx="7" cy="7" r="7" fill="#e01010"/><path d="M2 2h7L7 4l6 6-3 3-6-6-2 2z" fill="#fff"/></svg>';
const grid = '<svg width="6" height="6"><path d="M0.500 0.500h5v5h-5zM3 0v6M0 3h6" fill="none" stroke="#000"/></svg>';
let id = 0;
document.getElementById("layers").innerHTML = layerSets
  .map((set) => '<div class="layer-set">' + set.map(([name, cls]) => {
    id++;
    const active = id === 3;
    return `<div class="layer"><input type="checkbox" id="l${id}" ${active ? "checked" : ""}><span class="mark">${active ? arrow : ""}</span><label for="l${id}" class="${cls} ${active ? "active" : ""}">${name}${active ? grid : ""}</label></div>`;
  }).join("") + "</div>")
  .join("");

// result categories
const categories = ["Pad to pad (9570)", "Pad to circuit (6737)", "Circuit to circuit (6434)", "Same Net Spacing (2413)", "NPTH to circuit (2)", "PTH to Copper (6029)", "Shaved SMD (70)", "PTH (Comp) Annular ring (76)", "VIA Annular ring (12176)", "Spacing length (1465)", "Rout to Copper (47)", "Pads (26765)", "Lines (5186)", "Non standard rotated lines (240)", "Line Neckdown (63)", "Slivers (1177)", "Local Spacing (29)", "Stubs (29)", "SMD Pads (7920)", "SMD Pitch (149)", "SMD Packages (398)", "Conductor width (26961)"];
document.getElementById("categories").innerHTML = categories
  .map((c) => `<li class="${c.startsWith("Shaved") ? "on" : ""}">${c}</li>`)
  .join("");

// histogram
const bins = [["8.63", 49, "8.6-", "8.7"], ["10.68", 61, "10.6-", "10.7"], ["11.488", 65, "11.4-", "11.5"], ["15.342", 88, "15.3-", "15.4"], ["15.665", 90, "15.6-", "15.7"], ["20.918", 120, "20.9-", "21"], ["21.085", 121, "21-", "21.1"]];
document.getElementById("bars").innerHTML = bins
  .map((b, i) => `<div class="bar ${i === 1 ? "pick" : ""}" style="height:${b[1]}px"><span>${b[0]}</span></div>`)
  .join("");
document.getElementById("ranges").innerHTML = bins.map((b) => `<div>${b[2]}<span>${b[3]}</span></div>`).join("");

// board pads and the shaved areas between them
const rowsY = [88, 182, 277, 371, 465, 560, 654, 748, 842];
let pads = "";
[1043, 1137, 1231].forEach((x) => rowsY.forEach((y) => (pads += `<circle cx="${x}" cy="${y}" r="29"/>`)));
document.getElementById("pads").innerHTML = pads;

let hatches = "";
const box = (x, y, w, h) => (hatches += `<rect x="${x}" y="${y}" width="${w}" height="${h}"/>`);
[122, 217, 311, 782].forEach((y) => box(1028, y, 29, 25));
[396, 490, 585].forEach((y) => box(1015, y, 49, 43));
box(1020, 679, 44, 43);
[122, 217, 311, 405, 500, 594, 688, 782].forEach((y) => box(1123, y, 28, 25));
[122, 217, 311].forEach((y) => box(1217, y, 28, 25));
[73, 167, 262, 356, 450, 545, 639, 733].forEach((y) => box(1077, y, 25, 29));
[73, 167, 262].forEach((y) => box(1171, y, 25, 29));
box(1064, 822, 50, 36);
document.getElementById("hatches").innerHTML = hatches;
```
